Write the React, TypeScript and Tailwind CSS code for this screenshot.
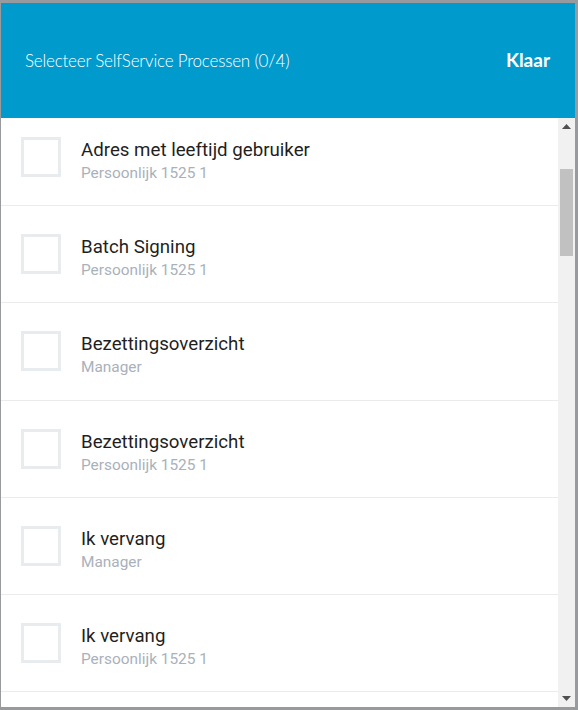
import { useState } from 'react';

interface Proces {
  naam: string;
  rol: string;
}

const processen: Proces[] = [
  { naam: 'Adres met leeftijd gebruiker', rol: 'Persoonlijk 1525 1' },
  { naam: 'Batch Signing', rol: 'Persoonlijk 1525 1' },
  { naam: 'Bezettingsoverzicht', rol: 'Manager' },
  { naam: 'Bezettingsoverzicht', rol: 'Persoonlijk 1525 1' },
  { naam: 'Ik vervang', rol: 'Manager' },
  { naam: 'Ik vervang', rol: 'Persoonlijk 1525 1' },
  { naam: 'Kilometerdeclaratie', rol: 'Persoonlijk 1525 1' },
];

function ProcesRow({ proces, checked, onToggle }: { proces: Proces; checked: boolean; onToggle: () => void }) {
  return (
    <div
      onClick={onToggle}
      className="flex items-start gap-5 pl-5 pt-7 h-[97.2px] border-b border-[#ebebeb] cursor-pointer shrink-0"
    >
      <div
        className={`w-10 h-10 border-[3px] shrink-0 ${checked ? 'border-[#0099cc] bg-[#0099cc]' : 'border-[#e9ecef] bg-white'}`}
      />
      <div className="flex flex-col pt-[2px]">
        <span className="text-[18.7px] leading-[22px] text-[#1f1f1f]">{proces.naam}</span>
        <span className="mt-[2px] text-[15.4px] leading-[20px] text-[#a9b1bb]">{proces.rol}</span>
      </div>
    </div>
  );
}

export default function App() {
  const [selected, setSelected] = useState<number[]>([]);

  const toggle = (i: number) =>
    setSelected((s) => (s.includes(i) ? s.filter((x) => x !== i) : [...s, i]));

  return (
    <div className="w-[578px] h-[710px] bg-[#979b9d] pt-[3px] pl-px pr-[3px] pb-[3px] overflow-hidden font-['Roboto',sans-serif]">
      <div className="flex flex-col w-[574px] h-[704px] bg-white">
        <div className="flex items-center justify-between h-[115px] bg-[#009acd] pl-6 pr-[25px] text-white shrink-0">
          <span className="font-['Lato',sans-serif] font-light text-[17px] tracking-[-0.2px]">
            Selecteer SelfService Processen ({selected.length}/4)
          </span>
          <button type="button" className="font-['Lato',sans-serif] font-bold text-[19px]">
            Klaar
          </button>
        </div>
        <div className="flex flex-1 min-h-0">
          <div className="flex-1 min-w-0 overflow-hidden">
            <div className="flex flex-col -mt-[9px]">
              {processen.map((p, i) => (
                <ProcesRow key={i} proces={p} checked={selected.includes(i)} onToggle={() => toggle(i)} />
              ))}
            </div>
          </div>
          <div className="flex flex-col w-[17px] bg-[#f1f1f1] shrink-0">
            <div className="flex items-center justify-center h-[17px]">
              <svg width="9" height="5" viewBox="0 0 9 5">
                <path d="M0 5 L4.5 0 L9 5 Z" fill="#505050" />
              </svg>
            </div>
            <div className="h-[34px]" />
            <div className="mx-[2px] h-[87px] bg-[#c1c1c1]" />
            <div className="flex-1" />
            <div className="flex items-center justify-center h-[17px]">
              <svg width="9" height="5" viewBox="0 0 9 5">
                <path d="M0 0 L9 0 L4.5 5 Z" fill="#505050" />
              </svg>
            </div>
          </div>
        </div>
      </div>
    </div>
  );
}
